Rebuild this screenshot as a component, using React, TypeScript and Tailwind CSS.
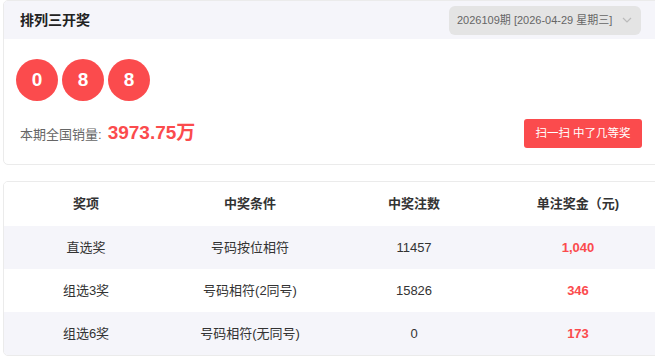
import React from 'react';

const balls = ['0', '8', '8'];

const rows = [
  { name: '直选奖', cond: '号码按位相符', count: '11457', prize: '1,040' },
  { name: '组选3奖', cond: '号码相符(2同号)', count: '15826', prize: '346' },
  { name: '组选6奖', cond: '号码相符(无同号)', count: '0', prize: '173' },
];

export default function App() {
  return (
    <div
      className="w-[655px] h-[361px] overflow-hidden bg-white pl-[3px] text-[#333]"
      style={{ fontFamily: '"Liberation Sans", "Noto Sans CJK SC", sans-serif' }}
    >
      <div className="w-[658px]">
        {/* 开奖卡片 */}
        <div className="h-[165px] rounded-[5px] border border-[#ebebeb] overflow-hidden bg-white">
          <div className="h-[38px] bg-[#f5f5fa] flex items-center justify-between pl-4 pr-[19px]">
            <h2 className="text-[14px] font-bold text-[#222]">排列三开奖</h2>
            <div className="h-[29px] w-[192px] rounded-[6px] bg-[#e4e4e4] flex items-center justify-between pl-[8px] pr-[9px] text-[11px] text-[#666] whitespace-nowrap">
              <span>2026109期 [2026-04-29 星期三]</span>
              <svg width="10" height="6" viewBox="0 0 10 6" fill="none">
                <path d="M1 1l4 4 4-4" stroke="#bbb" strokeWidth="1.2" />
              </svg>
            </div>
          </div>
          <div className="flex gap-1 pl-3 pt-5">
            {balls.map((b, i) => (
              <div
                key={i}
                className="w-[42px] h-[42px] rounded-full bg-[#fb4b4d] flex items-center justify-center text-white text-[19px] font-bold"
              >
                {b}
              </div>
            ))}
          </div>
          <div className="flex items-center justify-between pl-4 pr-[18px] mt-[18px]">
            <div className="flex items-baseline">
              <span className="text-[13px] text-[#666]">本期全国销量:</span>
              <span className="text-[19px] font-bold text-[#fb4b4d] ml-[6px]">3973.75万</span>
            </div>
            <button className="h-[29px] w-[118px] rounded-[3px] bg-[#fb4b4d] text-white text-[11.5px] whitespace-nowrap">
              扫一扫 中了几等奖
            </button>
          </div>
        </div>

        {/* 奖级表格 */}
        <div className="mt-4 rounded-[5px] border border-[#ebebeb] overflow-hidden">
          <div className="grid grid-cols-4 h-[44px] items-center text-center text-[13px] font-bold text-[#333] bg-white">
            <div>奖项</div>
            <div>中奖条件</div>
            <div>中奖注数</div>
            <div>单注奖金（元)</div>
          </div>
          {rows.map((r, i) => (
            <div
              key={r.name}
              className={`grid grid-cols-4 h-[43px] items-center text-center text-[13px] text-[#333] ${
                i % 2 === 0 ? 'bg-[#f5f5fa]' : 'bg-white'
              }`}
            >
              <div>{r.name}</div>
              <div>{r.cond}</div>
              <div>{r.count}</div>
              <div className="font-bold text-[#fb4b4d]">{r.prize}</div>
            </div>
          ))}
        </div>
      </div>
    </div>
  );
}
